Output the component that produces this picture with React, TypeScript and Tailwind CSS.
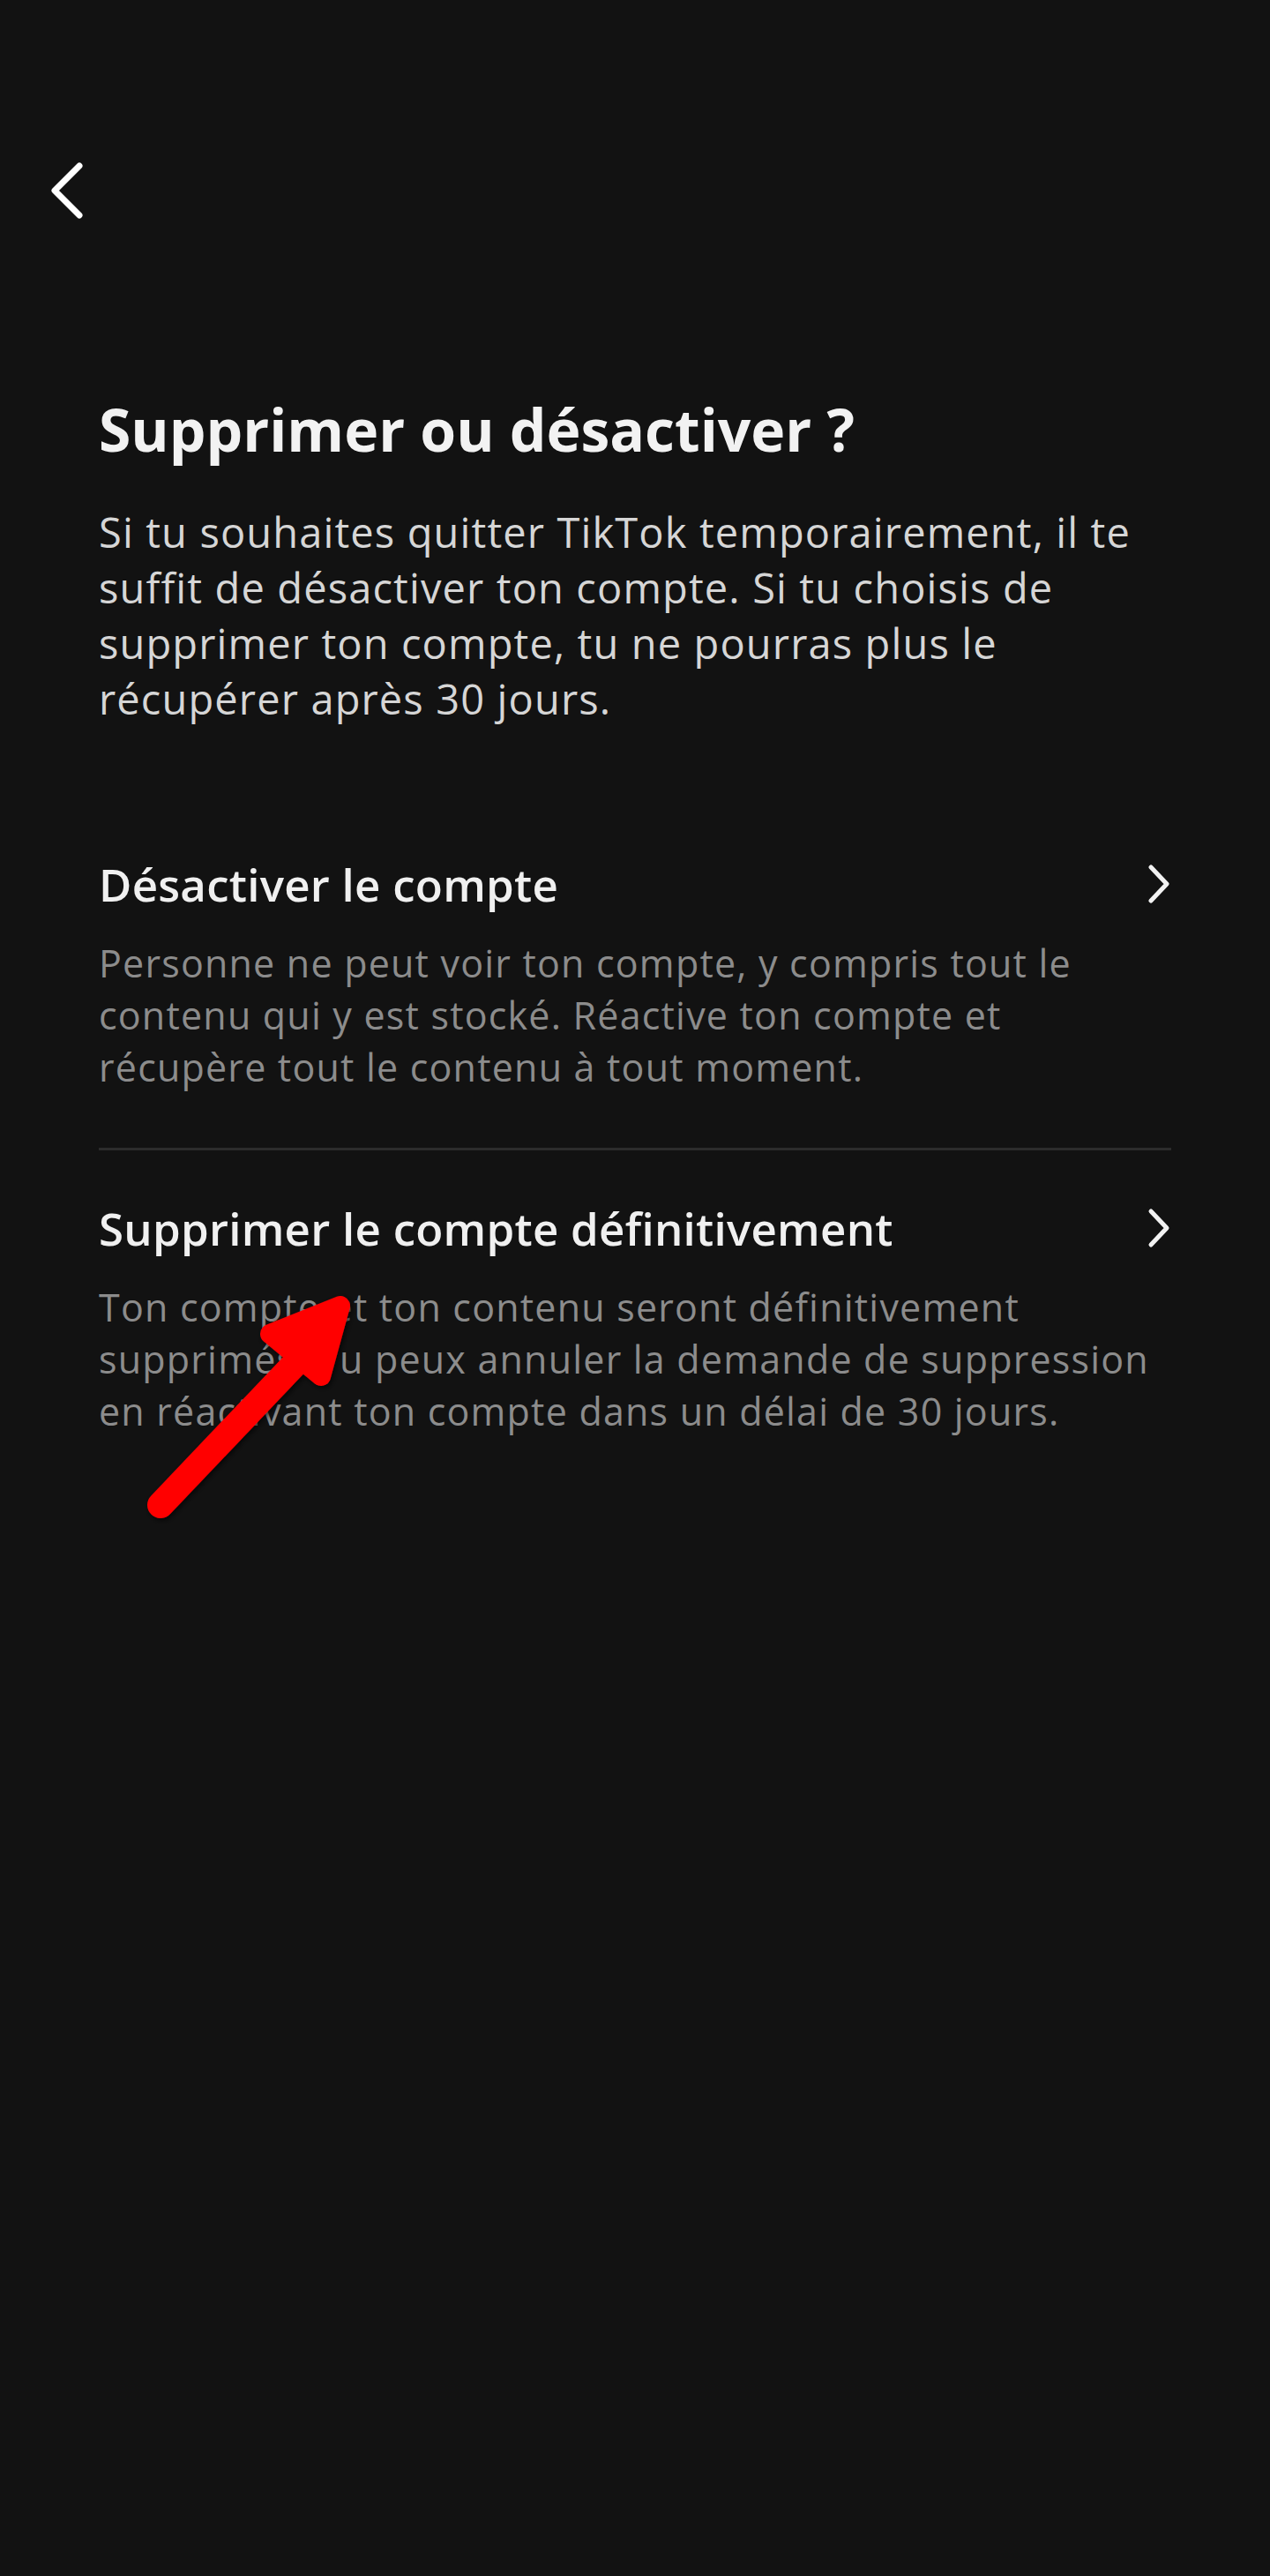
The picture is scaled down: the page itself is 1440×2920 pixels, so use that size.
import React from "react";

function ChevronRight() {
  return (
    <svg className="block shrink-0" width="30" height="48" viewBox="0 0 30 48" fill="none">
      <path d="M7 5 L25 24 L7 43" stroke="#f2f2f2" strokeWidth="5" strokeLinecap="round" strokeLinejoin="round" />
    </svg>
  );
}

function Option({ title, desc }: { title: string; desc: string }) {
  return (
    <div className="flex flex-col">
      <div className="flex items-center justify-between">
        <div className="text-[51px] leading-[60px] font-semibold tracking-[0.005em] text-[#f0f0f0]">{title}</div>
        <ChevronRight />
      </div>
      <p className="mt-[30px] text-[43px] leading-[59px] tracking-[0.028em] text-[#8c8c8c]">{desc}</p>
    </div>
  );
}

export default function App() {
  return (
    <div
      className="relative w-[1440px] h-[2920px] bg-[#121212] overflow-hidden"
      style={{ fontFamily: "'Open Sans', 'Noto Sans', sans-serif" }}
    >
      <div className="pt-[180px] pl-[54px]">
        <svg className="block" width="44" height="72" viewBox="0 0 44 72" fill="none">
          <path d="M36 8 L8 36 L36 64" stroke="#ffffff" strokeWidth="7" strokeLinecap="round" strokeLinejoin="round" />
        </svg>
      </div>
      <div className="px-[112px]">
        <h1 className="mt-[194px] text-[66px] leading-[80px] font-bold text-[#f2f2f2]">Supprimer ou désactiver ?</h1>
        <p className="mt-[46px] text-[47px] leading-[63px] tracking-[0.024em] text-[#d6d6d6]">
          Si tu souhaites quitter TikTok temporairement, il te suffit de désactiver ton compte. Si tu choisis de supprimer ton compte, tu ne pourras plus le récupérer après 30 jours.
        </p>
        <div className="mt-[148px]">
          <Option
            title="Désactiver le compte"
            desc="Personne ne peut voir ton compte, y compris tout le contenu qui y est stocké. Réactive ton compte et récupère tout le contenu à tout moment."
          />
        </div>
        <div className="mt-[62px] h-[3px] bg-[#2c2c2c]" />
        <div className="mt-[58px]">
          <Option
            title="Supprimer le compte définitivement"
            desc="Ton compte et ton contenu seront définitivement supprimés. Tu peux annuler la demande de suppression en réactivant ton compte dans un délai de 30 jours."
          />
        </div>
      </div>
      <svg className="absolute left-0 top-0" width="1440" height="2920" viewBox="0 0 1440 2920" fill="none">
        <defs>
          <filter id="sh" x="-20%" y="-20%" width="140%" height="140%">
            <feDropShadow dx="2" dy="2" stdDeviation="3" floodColor="#000" floodOpacity="0.7" />
          </filter>
        </defs>
        <g filter="url(#sh)">
          <line x1="182" y1="1706" x2="340" y2="1540" stroke="#ff0000" strokeWidth="30" strokeLinecap="round" />
          <path d="M306 1512 L386 1480 L364 1560 Z" fill="#ff0000" stroke="#ff0000" strokeWidth="22" strokeLinejoin="round" />
        </g>
      </svg>
    </div>
  );
}
